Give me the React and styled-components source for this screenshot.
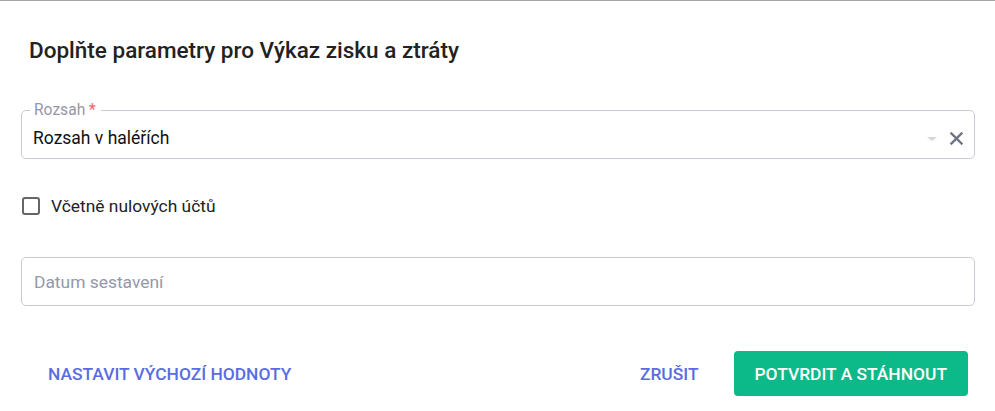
import React from "react";
import styled, { createGlobalStyle } from "styled-components";

const GlobalStyle = createGlobalStyle`
  html, body {
    margin: 0;
    padding: 0;
    background: #ffffff;
    font-family: Roboto, "Liberation Sans", Arial, sans-serif;
  }
`;

const App = () => {
  const [range, setRange] = React.useState("Rozsah v haléřích");
  const [withZero, setWithZero] = React.useState(false);
  const [date, setDate] = React.useState("");

  return (
    <Dialog>
      <GlobalStyle />
      <Title>Doplňte parametry pro Výkaz zisku a ztráty</Title>

      <Outlined>
        <Legend>
          Rozsah <Required>*</Required>
        </Legend>
        <SelectRow>
          <Value>{range}</Value>
          <Arrow />
          <ClearButton onClick={() => setRange("")} aria-label="Vymazat">
            <svg width="13" height="13" viewBox="0 0 13 13">
              <path
                d="M1.5 1.5 L11.5 11.5 M11.5 1.5 L1.5 11.5"
                stroke="#6f7384"
                strokeWidth="2.4"
                strokeLinecap="square"
              />
            </svg>
          </ClearButton>
        </SelectRow>
      </Outlined>

      <CheckRow>
        <Box
          type="checkbox"
          checked={withZero}
          onChange={(e) => setWithZero(e.target.checked)}
        />
        <CheckLabel>Včetně nulových účtů</CheckLabel>
      </CheckRow>

      <DateInput
        placeholder="Datum sestavení"
        value={date}
        onChange={(e) => setDate(e.target.value)}
      />

      <Actions>
        <TextButton>Nastavit výchozí hodnoty</TextButton>
        <Spacer />
        <TextButton $trail>Zrušit</TextButton>
        <PrimaryButton>Potvrdit a stáhnout</PrimaryButton>
      </Actions>
    </Dialog>
  );
};

const Dialog = styled.div`
  box-sizing: border-box;
  width: 995px;
  height: 411px;
  border-top: 1px solid #a6a6a6;
  padding: 34px 20px 0 21px;
  display: flex;
  flex-direction: column;
`;

const Title = styled.h2`
  margin: 0 0 36px 8px;
  font-size: 22.5px;
  line-height: 30px;
  font-weight: 500;
  color: #222222;
`;

const Outlined = styled.fieldset`
  margin: 0;
  padding: 9px 11px 10px 11px;
  border: 1px solid #c9cbd3;
  border-radius: 5px;
  min-width: 0;
`;

const Legend = styled.legend`
  margin-left: -3px;
  padding: 0 5px 0 4px;
  font-size: 15.6px;
  line-height: 18px;
  color: #9597a8;
`;

const Required = styled.span`
  color: #f0616b;
`;

const SelectRow = styled.div`
  display: flex;
  align-items: center;
  height: 20px;
`;

const Value = styled.span`
  flex: 1;
  font-size: 17.5px;
  line-height: 20px;
  color: #111111;
`;

const Arrow = styled.span`
  width: 0;
  height: 0;
  border-left: 5px solid transparent;
  border-right: 5px solid transparent;
  border-top: 4px solid #d5d6dc;
  margin: 2px 13px 0 0;
`;

const ClearButton = styled.button`
  border: 0;
  background: none;
  padding: 0;
  display: flex;
  cursor: pointer;
`;

const CheckRow = styled.label`
  display: flex;
  align-items: center;
  gap: 11px;
  margin: 35px 0 0 1px;
  height: 24px;
  cursor: pointer;
`;

const Box = styled.input`
  appearance: none;
  margin: 0;
  width: 18px;
  height: 18px;
  border: 2px solid #666666;
  border-radius: 3px;
  box-sizing: border-box;
`;

const CheckLabel = styled.span`
  font-size: 17.4px;
  color: #222222;
`;

const DateInput = styled.input`
  box-sizing: border-box;
  margin-top: 39px;
  height: 49px;
  width: 100%;
  border: 1px solid #c9cbd3;
  border-radius: 5px;
  padding: 0 12px;
  font-family: inherit;
  font-size: 17.4px;
  color: #111111;
  outline: none;

  &::placeholder {
    color: #9398aa;
  }
`;

const Actions = styled.div`
  display: flex;
  align-items: center;
  margin-top: 45px;
  padding-right: 7px;
  gap: 16px;
`;

const Spacer = styled.div`
  flex: 1;
`;

const TextButton = styled.button`
  border: 0;
  background: none;
  padding: ${(p) => (p.$trail ? "0 19px 0 18px" : "0 11px 0 27px")};
  height: 45px;
  font-family: inherit;
  font-size: 17.4px;
  font-weight: 500;
  text-transform: uppercase;
  color: #5b6ce0;
  cursor: pointer;
`;

const PrimaryButton = styled.button`
  border: 0;
  border-radius: 4px;
  background: #0bba88;
  color: #ffffff;
  height: 45px;
  padding: 0 21px;
  font-family: inherit;
  font-size: 17.4px;
  font-weight: 500;
  text-transform: uppercase;
  cursor: pointer;
`;

export default App;
